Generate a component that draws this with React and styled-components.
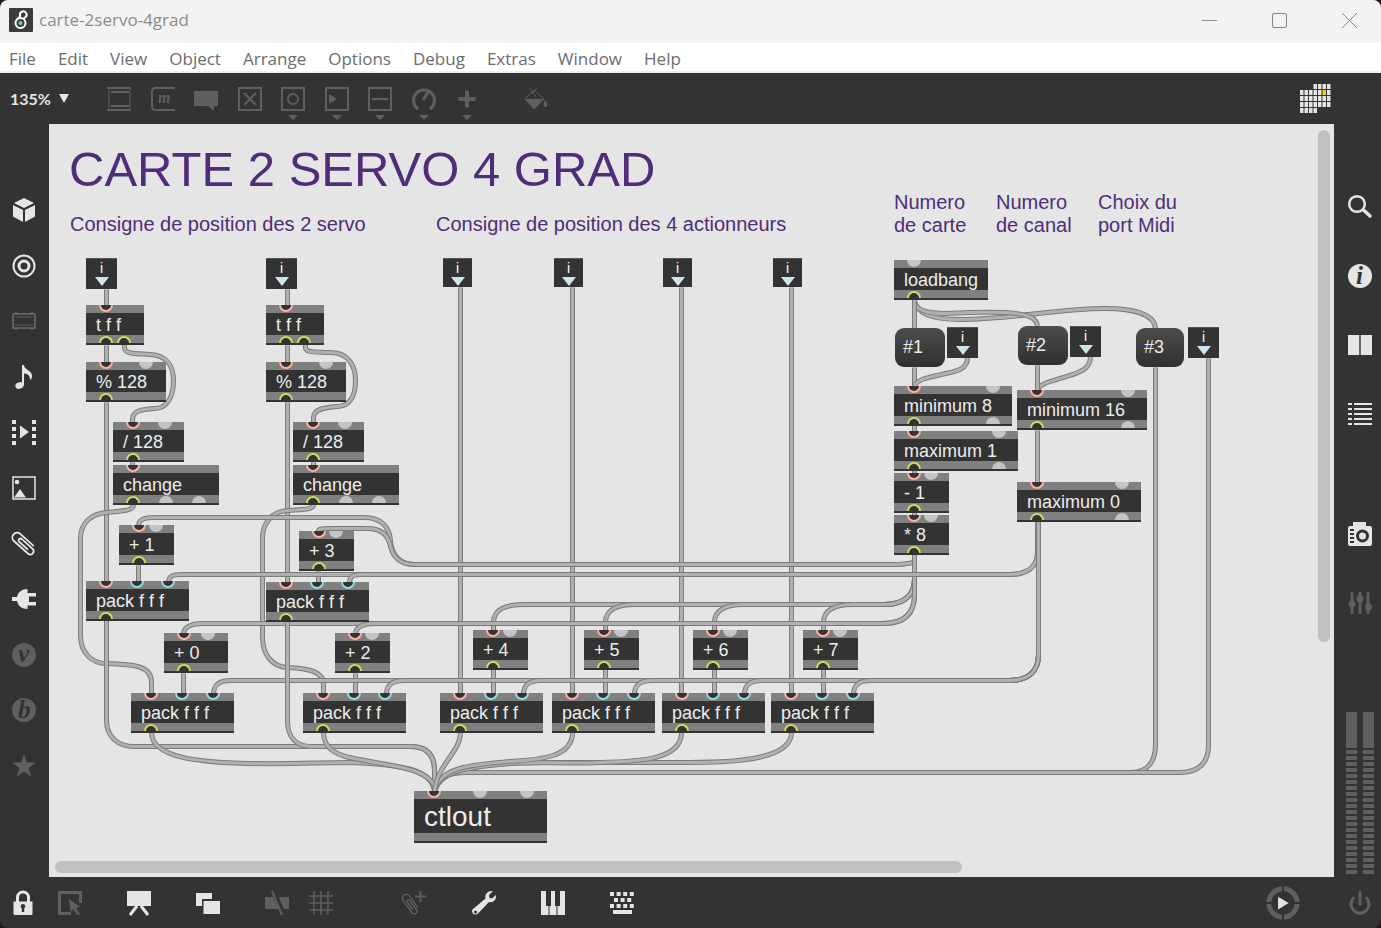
import React from 'react';
import styled, { createGlobalStyle, css } from 'styled-components';

const colors = {
  chrome: '#333333',
  canvas: '#e5e5e5',
  bright: '#e5e5e5',
  dim: '#5f5f5f',
  rail: '#808080',
  comment: '#502d78',
  hot: '#ffb0a0',
  cold: '#8fdcea',
  outlet: '#d0dc5c',
  unused: '#c2c4c7',
  cordEdge: '#7c7c7c',
  cord: '#b0b0b0',
};

const GlobalStyle = createGlobalStyle`
  * {
    box-sizing: border-box;
  }

  body {
    margin: 0;
    background: #24161c;
    font-family: 'Open Sans', sans-serif;
  }

  button {
    margin: 0;
    padding: 0;
    border: 0;
    background: none;
    color: inherit;
    font: inherit;
    cursor: pointer;
  }

  svg {
    display: block;
    overflow: visible;
  }
`;

const Window = styled.div`
  display: flex;
  flex-direction: column;
  min-height: 100vh;
  border-radius: 8px;
  overflow: hidden;
  background: ${colors.chrome};
`;

/* ---------- title and menus ---------- */

const TitleBar = styled.header`
  display: flex;
  align-items: center;
  height: 43px;
  padding: 0 8px 3px 9px;
  background: #f3f3f3;
  color: #8c8c8c;
`;

const WindowTitle = styled.h1`
  flex: 1;
  margin: 0 0 0 6px;
  font-size: 17px;
  font-weight: 400;
  line-height: 24px;
`;

const WindowControls = styled.div`
  display: flex;
  gap: 22px;

  button {
    display: flex;
    align-items: center;
    justify-content: center;
    width: 48px;
    height: 40px;
  }
`;

const MenuBar = styled.nav`
  display: flex;
  gap: 22px;
  height: 30px;
  padding-left: 9px;
  background: #fff;
  border-bottom: 2px solid #f0f0f0;
`;

const MenuItem = styled.button`
  padding-top: 3px !important;
  font-size: 17px;
  line-height: 24px;
  color: #6c6c6c !important;
`;

/* ---------- toolbars ---------- */

const TopBar = styled.div`
  display: flex;
  align-items: center;
  height: 51px;
  padding: 0 50px 0 10px;
  color: ${colors.dim};
`;

const Zoom = styled.button`
  display: flex;
  align-items: center;
  gap: 8px;
  width: 97px;
  font-family: Lato, sans-serif;
  font-size: 16px;
  font-weight: 700;
  color: ${colors.bright} !important;
`;

const ToolGroup = styled.div`
  display: flex;
  justify-content: space-between;
  width: 372px;
`;

const IconButton = styled.button`
  display: flex;
  flex-direction: column;
  align-items: center;
  width: ${({ $wide }) => $wide || 24}px;
  color: ${({ $dim }) => ($dim ? colors.dim : colors.bright)} !important;
`;

const Tool = styled(IconButton)`
  position: relative;

  ${({ $more }) =>
    $more &&
    css`
      &::after {
        content: '';
        position: absolute;
        top: 28px;
        border: 5px solid transparent;
        border-top-color: ${colors.dim};
        border-bottom: 0;
      }
    `}
`;

const FillTool = styled(IconButton)`
  margin-left: 45px;
`;

const GridTool = styled(IconButton)`
  margin-left: auto;
`;

const Workspace = styled.div`
  display: flex;
  flex: 1;
`;

const SideBar = styled.aside`
  display: flex;
  flex-direction: column;
  align-items: center;
  width: ${({ $width }) => $width}px;
  padding-top: ${({ $top }) => $top}px;
`;

const LeftTools = styled.div`
  display: flex;
  flex-direction: column;
  justify-content: space-between;
  height: 580px;
  margin-right: 2px;
`;

const RightTools = styled.div`
  display: flex;
  flex-direction: column;
  gap: 45px;
  margin-left: 4px;
`;

const SnapshotTools = styled(RightTools)`
  margin-top: 96px;
`;

const Meters = styled.div`
  display: flex;
  gap: 6px;
  margin: auto 0 3px 5px;
`;

const Meter = styled.div`
  width: 11px;
  height: 162px;
  background:
    linear-gradient(${colors.dim} 36px, transparent 36px),
    repeating-linear-gradient(transparent 0 2px, ${colors.dim} 2px 6px);
`;

const BottomBar = styled.footer`
  display: flex;
  align-items: center;
  height: 51px;
  padding: 0 9px 0 11px;
`;

const BottomGroup = styled.div`
  display: flex;
  gap: ${({ $gap }) => $gap}px;
  margin-left: ${({ $start }) => $start || 0}px;
`;

const BottomRight = styled(BottomGroup)`
  align-items: center;
  margin-left: auto;
`;

/* ---------- patcher ---------- */

const Patcher = styled.main`
  position: relative;
  flex: 1;
  min-width: 0;
  overflow: hidden;
  background: ${colors.canvas};
  font-family: 'Liberation Sans', Arial, sans-serif;
`;

const Cords = styled.svg`
  position: absolute;
  inset: 0;
  width: 100%;
  height: 100%;
  fill: none;
`;

const placed = css`
  position: absolute;
  left: ${({ $x }) => $x}px;
  top: ${({ $y }) => $y}px;
`;

const Comment = styled.p`
  ${placed}
  margin: 0;
  white-space: pre;
  color: ${colors.comment};
  font-size: ${({ $big }) => ($big ? 49 : 20)}px;
  line-height: ${({ $big }) => ($big ? 56 : 23)}px;
`;

const Box = styled.div`
  ${placed}
  width: ${({ $w }) => $w}px;
  border-top: 8px solid ${colors.rail};
  border-bottom: 2px solid ${colors.chrome};
  background: ${colors.chrome};
  color: #ececec;
`;

const BoxText = styled.div`
  padding: 2px 0 0 10px;
  white-space: pre;
  font-size: ${({ $big }) => ($big ? 28 : 18)}px;
  line-height: ${({ $big }) => ($big ? 32 : 20)}px;
`;

const Rail = styled.div`
  height: 8px;
  background: ${colors.rail};
`;

const portShape = css`
  position: absolute;
  left: ${({ $at }) => $at - 7}px;
  width: 14px;
  height: 7px;
  border: 2px solid ${({ $color }) => $color};
  background: ${({ $color }) => ($color === colors.unused ? colors.unused : colors.chrome)};
`;

const Inport = styled.span`
  ${portShape}
  top: -8px;
  border-top: 0;
  border-radius: 0 0 7px 7px;
`;

const Outport = styled.span`
  ${portShape}
  bottom: 0;
  border-bottom: 0;
  border-radius: 7px 7px 0 0;
`;

const InletBox = styled.div`
  ${placed}
  display: flex;
  flex-direction: column;
  align-items: center;
  gap: 1px;
  width: ${({ $size }) => $size}px;
  height: ${({ $size }) => $size}px;
  padding-top: 2px;
  border-top: 1px solid #555;
  background: ${colors.chrome};
  color: #fff;
  font-size: 14px;
  line-height: 15px;

  &::after {
    content: '';
    border: 7px solid transparent;
    border-top: 9px solid #cce6ea;
    border-bottom: 0;
  }
`;

const Message = styled.button`
  ${placed}
  width: ${({ $w }) => $w}px;
  height: 39px;
  padding-left: 8px !important;
  border-radius: 9px;
  background: linear-gradient(#4c4c4c, #303030) !important;
  color: #ececec !important;
  font-size: 18px !important;
  text-align: left;
`;

const Thumb = styled.div`
  position: absolute;
  border-radius: 6px;
  background: #c0c0c0;
`;

const VerticalThumb = styled(Thumb)`
  top: 6px;
  right: 4px;
  width: 12px;
  height: 68%;
`;

const HorizontalThumb = styled(Thumb)`
  bottom: 4px;
  left: 6px;
  width: 70.6%;
  height: 12px;
`;

const HOT = colors.hot;
const COLD = colors.cold;
const OUT = colors.outlet;
const NONE = colors.unused;

const adder = (x, y, text, w = 55, second = 37) => ({
  x, y, w, text, ins: [[20, HOT], [second, NONE]], outs: [[20, OUT]],
});

const pack = (x, y) => ({
  x, y, w: 103, text: 'pack f f f', ins: [[20, HOT], [51, COLD], [82, COLD]], outs: [[20, OUT]],
});

const limiter = (x, y, w, text, second) => ({
  x, y, w, text, ins: [[20, HOT], [second, NONE]], outs: [[20, OUT], [second, NONE]],
});

const servo = x => [
  { x, y: 181, w: 58, text: 't f f', ins: [[20, HOT]], outs: [[20, OUT], [38, OUT]] },
  adder(x, 238, '% 128', 80, 60),
  adder(x + 27, 298, '/ 128', 71, 52),
  { x: x + 27, y: 341, w: 106, text: 'change', ins: [[20, HOT]], outs: [[20, OUT], [53, NONE], [86, NONE]] },
];

const boxes = [
  ...servo(37),
  ...servo(217),
  adder(70, 401, '+ 1'),
  adder(250, 407, '+ 3'),
  pack(37, 457),
  pack(217, 458),
  adder(115, 509, '+ 0', 64, 44),
  adder(286, 509, '+ 2'),
  pack(82, 569),
  pack(254, 569),
  adder(424, 506, '+ 4'),
  adder(535, 506, '+ 5'),
  adder(644, 506, '+ 6'),
  adder(754, 506, '+ 7'),
  pack(391, 569),
  pack(503, 569),
  pack(613, 569),
  pack(722, 569),
  { x: 845, y: 136, w: 94, text: 'loadbang', ins: [[20, NONE]], outs: [[20, OUT]] },
  limiter(845, 262, 118, 'minimum 8', 99),
  limiter(845, 307, 124, 'maximum 1', 105),
  adder(845, 349, '- 1'),
  adder(845, 391, '* 8'),
  limiter(968, 266, 130, 'minimum 16', 111),
  limiter(968, 358, 124, 'maximum 0', 105),
  { x: 365, y: 667, w: 133, text: 'ctlout', big: true, ins: [[20, HOT], [66, NONE], [113, NONE]], outs: [] },
];

const inlets = [
  [37, 134, 31],
  [217, 134, 31],
  [394, 134, 29],
  [505, 134, 29],
  [614, 134, 29],
  [724, 134, 29],
  [898, 203, 31],
  [1021, 202, 31],
  [1139, 203, 31],
];

const messages = [
  [846, 204, 50, '#1'],
  [969, 202, 50, '#2'],
  [1087, 204, 48, '#3'],
];

const comments = [
  [20, 17, 'CARTE 2 SERVO 4 GRAD', true],
  [21, 89, 'Consigne de position des 2 servo'],
  [387, 89, 'Consigne de position des 4 actionneurs'],
  [845, 67, 'Numero\nde carte'],
  [947, 67, 'Numero\nde canal'],
  [1049, 67, 'Choix du\nport Midi'],
];

const cords = [
  // servo columns
  'M57 165V181',
  'M238 165V181',
  'M57 221V239',
  'M238 221V239',
  'M75 220V223C75 230 88 229 101 230C117 231 124 241 124 256C124 272 118 284 105 284C92 285 83 286 83 295V298',
  'M256 220V223C256 229 268 227 281 228C297 228 306 239 306 256C306 272 300 282 287 282C274 283 264 285 264 293V298',
  'M57 278V457',
  'M238 278V458',
  'M83 338V342',
  'M264 338V342',
  'M84 380C84 387 72 386 58 388C40 389 31 400 31 414V511C31 528 42 539 57 539C85 540 102 541 102 558V570',
  'M264 380C264 386 250 385 238 386C221 387 213 400 213 414V512C213 530 222 542 238 543C262 544 274 548 274 560V570',
  'M89 441V458',
  'M269 447V459',
  'M134 549V570',
  'M306 549V570',
  // actuator inlets
  ...[411, 523, 632, 742].map(x => `M${x} 163V570`),
  ...[444, 556, 665, 774].map(x => `M${x} 545V570`),
  // board number
  'M89 402C89 394 96 393 106 393H315C331 393 340 402 341 416C342 430 350 440 365 440H840C852 440 862 439 865 437V430',
  'M269 408V406C270 404 275 404 281 404H318C332 404 339 411 341 422C344 434 352 440 365 440H840C852 440 862 439 865 437V430',
  ...[444, 556, 665, 774].map(x => `M${x} 507V498C${x} 486 ${x + 11} 480 ${x + 29} 480H835C854 480 865 471 865 455V430`),
  ...[134, 306].map(x => `M${x} 510C${x} 502 ${x + 8} 499 ${x + 20} 499H834C855 499 865 489 865 470V430`),
  // channel number
  ...[119, 300].map(x => `M${x} 458C${x} 451 ${x + 5} 450 ${x + 13} 450H960C978 450 988 442 988 428V398`),
  ...[164, 337, 474, 585, 695, 804].map(
    x => `M${x} 570C${x} 560 ${x + 6} 556 ${x + 17} 556H960C980 556 989 546 989 530V398`
  ),
  // to ctlout
  'M57 496V596C57 612 68 622 85 622H361C377 622 385 630 385 646V668',
  'M238 497V596C238 612 246 622 262 622H361C377 622 385 630 385 646V668',
  'M102 608C102 634 152 638 200 639C240 640 270 638 301 638C350 640 384 644 385 668',
  'M274 608C274 626 290 632 310 635C345 642 378 644 385 662V668',
  'M1106 243V620C1106 636 1099 648 1081 648H415C400 648 388 652 385 668',
  'M1159 234V621C1159 638 1149 648 1131 648H415C400 648 388 652 385 668',
  'M742 608C742 634 690 638 640 638H500C440 638 388 642 385 668',
  'M632 608C632 636 588 637 550 638C510 640 480 636 450 640C415 643 388 648 385 668',
  'M523 608C523 632 494 635 460 637C425 640 388 642 385 668',
  'M411 608C411 628 387 640 385 668',
  // loadbang
  'M865 176C867 190 885 195 910 195C960 195 1010 184 1055 184C1085 184 1106 190 1106 205',
  'M865 176C865 186 877 189 897 189C915 188 935 187 955 188C978 189 988 193 988 203',
  'M865 175V205',
  'M865 243V263',
  'M918 233C918 246 905 247 892 250C878 253 867 255 865 262',
  'M865 301V392',
  'M1041 232C1041 247 1025 249 1014 253C1000 257 988 260 988 267',
  'M988 241V267',
  'M988 306V359',
];

const Icon = ({ size = 24, children, ...rest }) => (
  <svg width={size} height={size} viewBox="0 0 24 24" fill="currentColor" aria-hidden="true" {...rest}>
    {children}
  </svg>
);

const line = { fill: 'none', stroke: 'currentColor', strokeWidth: 2 };

const clip = (
  <path
    {...line}
    strokeWidth="1.800"
    strokeLinecap="round"
    transform="rotate(42 12 12)"
    d="M20 7H2.500A4.700 4.700 0 0 0 2.500 16.500H22A3.400 3.400 0 0 0 22 9.800H6.500A2 2 0 0 0 6.500 13.600H18"
  />
);

const Letter = ({ children, x = 6, y = 19, size = 25, ...rest }) => (
  <text x={x} y={y} fontFamily="Liberation Serif, serif" fontSize={size} fontWeight="700" fontStyle="italic" {...rest}>
    {children}
  </text>
);

const topTools = [
  ['Object', false, <path {...line} d="M2 0v24M23 0v24" key="a" strokeWidth="1" />, <path {...line} d="M0 1h24M4 5h18M4 19h18M0 23h24" key="b" />],
  [
    'Message',
    false,
    <path {...line} d="M24 1H5Q1 1 1 5V19Q1 23 5 23H24" key="a" />,
    <Letter x={7} y={16} size={16} key="b">m</Letter>,
  ],
  ['Comment', false, <path d="M0 4H24V19H20V24L14 19H0Z" key="a" />],
  ['Toggle', false, <path {...line} d="M1 1H23V23H1ZM6 6 18 18M18 6 6 18" key="a" />],
  ['Button', true, <path {...line} d="M1 1H23V23H1Z" key="a" />, <circle {...line} cx="12" cy="12" r="5" key="b" />],
  ['Number', true, <path {...line} d="M1 1H23V23H1Z" key="a" />, <path d="M4 7 12 12 4 17Z" key="b" />],
  ['Slider', true, <path {...line} d="M1 1H23V23H1ZM4 12H20" key="a" />],
  ['Dial', true, <path {...line} strokeWidth="3" d="M6 22A10.500 10.500 0 1 1 18 22M11 13 16 5" key="a" />],
  ['Add', true, <path d="M10 3.500H14V10H20.500V14H14V20.500H10V14H3.500V10H10Z" key="a" />],
];

const leftTools = [
  [
    'Objects',
    false,
    <path d="M12 0 22 5 12 10 2 5ZM1 7 11 12V24L1 18.500ZM23 7 13 12V24L23 18.500Z" key="a" />,
  ],
  [
    'Audio',
    false,
    <circle {...line} cx="12" cy="12" r="10.500" key="a" />,
    <circle {...line} strokeWidth="3" cx="12" cy="12" r="5" key="b" />,
  ],
  [
    'Plug-ins',
    true,
    <path {...line} d="M1 5H23V19H1ZM4 3V5M20 3V5M4 19V21M20 19V21" key="a" />,
    <path {...line} strokeWidth="1" d="M3 8H21M3 16H21" key="b" />,
  ],
  [
    'Sounds',
    false,
    <ellipse cx="7.500" cy="20.500" rx="4.200" ry="3.200" transform="rotate(-20 7.500 20.500)" key="a" />,
    <path d="M10 0H12C12 5 20 5 20 11 20 13 19.500 14 18 15 18.500 9.500 14 8.500 12 8.500V20.500H10Z" key="b" />,
  ],
  [
    'Video',
    false,
    <path d="M8 5.500 17 12 8 18.500Z" key="a" />,
    <path {...line} strokeWidth="4" strokeDasharray="4 3" d="M2 0V25M22 0V25" key="b" />,
  ],
  [
    'Images',
    false,
    <path {...line} strokeWidth="1.500" d="M1 1H23V23H1Z" key="a" />,
    <circle cx="5" cy="6" r="2.300" key="b" />,
    <path d="M2 21.500 8 13 14 21.500Z" key="c" />,
  ],
  ['Paperclips', false, React.cloneElement(clip, { key: 'a' })],
  ['Extensions', false, <path d="M0 10H5C6 5 10 2 15.500 2V6H24V9.500H17V15H24V18.500H15.500V22C10 22 6 19 5 14H0Z" key="a" />],
  [
    'Vizzie',
    true,
    <circle cx="12" cy="12" r="12" key="a" />,
    <Letter fill={colors.chrome} key="b">v</Letter>,
  ],
  [
    'Beap',
    true,
    <circle cx="12" cy="12" r="12" key="a" />,
    <Letter y={20} fill={colors.chrome} key="b">b</Letter>,
  ],
  ['Favorites', true, <path d="M12 0 14.800 8.500H24L16.500 14 19.500 23 12 17.500 4.500 23 7.500 14 0 8.500H9.200Z" key="a" />],
];

const rightTools = [
  [
    'Search',
    false,
    <circle {...line} strokeWidth="2.500" cx="9" cy="9" r="7.800" key="a" />,
    <path {...line} strokeWidth="3.500" strokeLinecap="round" d="M15.500 15 22 21" key="b" />,
  ],
  [
    'Inspector',
    false,
    <circle cx="12" cy="12" r="12" key="a" />,
    <Letter x={8} y={20} fill={colors.chrome} key="b">i</Letter>,
  ],
  ['Reference', false, <path d="M0 2H11.300V22H0ZM12.700 2H24V22H12.700Z" key="a" />],
  ['Console', false, <path {...line} d="M0 2H4M0 7H4M0 12H4M0 17H4M0 22H4M6 2H24M6 7H24M6 12H24M6 17H24M6 22H24" key="a" />],
];

const snapshotTools = [
  [
    'Snapshots',
    false,
    <path d="M5 0H18V4H22Q24 4 24 6V22Q24 24 22 24H2Q0 24 0 22V6Q0 4 2 4H5Z" key="a" />,
    <circle cx="14.500" cy="14" r="5" fill="none" stroke={colors.chrome} strokeWidth="3" key="b" />,
    <path d="M2 8H6M2 12H6M2 16H6M2 20H6" stroke={colors.chrome} strokeWidth="2" key="c" />,
  ],
  [
    'Parameters',
    true,
    <path {...line} strokeWidth="3" d="M4 1V23M12 1V23M20 1V23" key="a" />,
    <circle cx="4" cy="13" r="3.500" key="b" />,
    <circle cx="12" cy="8" r="3.500" key="c" />,
    <circle cx="20.500" cy="16" r="3.500" key="d" />,
  ],
];

const bottomTools = [
  {
    gap: 23,
    start: 0,
    tools: [
      [
        'Lock',
        false,
        <path {...line} strokeWidth="3" d="M6.500 12V6.500A5 5 0 0 1 17.500 6.500V12" key="a" />,
        <path d="M2.500 10.500H21.500V22.500Q21.500 24 20 24H4Q2.500 24 2.500 22.500Z" key="b" />,
        <path d="M12 13A2.300 2.300 0 0 1 13.200 17.300V21H10.800V17.300A2.300 2.300 0 0 1 12 13Z" fill={colors.chrome} key="c" />,
      ],
      [
        'Select',
        true,
        <path {...line} strokeWidth="3" d="M22.500 12V1.500H1.500V22.500H13" key="a" />,
        <path d="M11 8 22 16 18 17 22 23 19 24 15.500 18 12.500 21Z" key="b" />,
      ],
    ],
  },
  { gap: 45, start: 45, tools: [
    ['Presentation', false, <path d="M0 0H24V15H0Z" key="a" />, <path {...line} strokeWidth="3" d="M10 15 3 24M14 15 21 24" key="b" />],
    ['Patcher windows', false, <path d="M0 2H16V8H6V15H0ZM7.500 10H24V23H7.500Z" key="a" />],
    [
      'Hide on lock',
      true,
      <path d="M0 6H8L14 18H0ZM13.500 6H24V18H19Z" key="a" />,
      <path {...line} d="M7 0 17 24" key="b" />,
    ],
  ] },
  { gap: 69, start: 20, tools: [
    ['Grid', true, <path {...line} strokeWidth="1.500" d="M5 0V24M12 0V24M19 0V24M0 5H24M0 12H24M0 19H24" key="a" />],
    [
      'Add paperclip',
      true,
      <g transform="translate(-1 4) scale(.8)" key="a"><g transform="rotate(12 12 12)">{clip}</g></g>,
      <path {...line} d="M18.500 0V11M13 5.500H24" key="b" />,
    ],
  ] },
  { gap: 45, start: 46, tools: [
    [
      'Tools',
      false,
      <path fillRule="evenodd" d="M21 0 17 4 17.500 7 20 7.500 24 4C24.500 9 21 12 17 11L6 22.500C3.500 25-1.500 22.500.5 18.500L13.500 7.500C12.500 3 16-.5 21 0ZM3.500 19.500A1.500 1.500 0 1 0 3.500 22.500 1.500 1.500 0 0 0 3.500 19.500Z" key="a" />,
    ],
    [
      'Keyboard',
      false,
      <path d="M0 0H5V15H7.500V24H0ZM8.500 15H10V0H14V15H15.500V24H8.500ZM19 0H24V24H16.500V15H19Z" key="a" />,
    ],
    [
      'Shortcuts',
      false,
      <path {...line} strokeWidth="4" strokeDasharray="4 2.600" d="M0 3H24M0 15H24M4 9H22" key="a" />,
      <path d="M3 19H22V23H3Z" key="b" />,
    ],
  ] },
];

// first and last column of each row
const calendarRows = [
  [3, 7],
  [0, 7],
  [0, 7],
  [0, 7],
  [0, 4],
];

const renderTool = ([label, dim, ...shapes]) => (
  <IconButton key={label} aria-label={label} $dim={dim}>
    <Icon>{shapes}</Icon>
  </IconButton>
);

const PatchBox = ({ x, y, w, text, big, ins, outs }) => (
  <Box $x={x} $y={y} $w={w}>
    {ins.map(([at, color]) => (
      <Inport key={at} $at={at} $color={color} />
    ))}
    <BoxText $big={big}>{text}</BoxText>
    <Rail />
    {outs.map(([at, color]) => (
      <Outport key={at} $at={at} $color={color} />
    ))}
  </Box>
);

const App = () => (
  <>
    <GlobalStyle />
    <Window>
      <TitleBar>
        <svg width="24" height="24" viewBox="0 0 24 24" aria-hidden="true">
          <rect width="24" height="24" rx="1" fill="#3c3c3c" />
          <g fill="none" stroke="#fff" strokeWidth="2">
            <circle cx="11.500" cy="15" r="5" />
            <path d="M8 11.500 11 8.500V7A3.300 3.300 0 1 1 16 9.500L14 11" />
          </g>
          <circle cx="11.500" cy="15" r="2" fill="#4fd8c0" />
        </svg>
        <WindowTitle>carte-2servo-4grad</WindowTitle>
        <WindowControls>
          <button aria-label="Minimize">
            <svg width="15" height="15" stroke="#909090"><path d="M0 7.500H15" /></svg>
          </button>
          <button aria-label="Maximize">
            <svg width="15" height="15" fill="none" stroke="#858585"><rect x=".5" y=".5" width="14" height="14" rx="1.500" /></svg>
          </button>
          <button aria-label="Close">
            <svg width="15" height="15" stroke="#858585"><path d="M0 0 15 15M15 0 0 15" /></svg>
          </button>
        </WindowControls>
      </TitleBar>

      <MenuBar>
        {['File', 'Edit', 'View', 'Object', 'Arrange', 'Options', 'Debug', 'Extras', 'Window', 'Help'].map(name => (
          <MenuItem key={name}>{name}</MenuItem>
        ))}
      </MenuBar>

      <TopBar>
        <Zoom>
          135%
          <svg width="10" height="9" viewBox="0 0 10 9" fill="currentColor"><path d="M0 0H10L5 9Z" /></svg>
        </Zoom>
        <ToolGroup>
          {topTools.map(([label, more, ...shapes]) => (
            <Tool key={label} aria-label={label} $dim $more={more}>
              <Icon>{shapes}</Icon>
            </Tool>
          ))}
        </ToolGroup>
        <FillTool aria-label="Format palette" $dim>
          <Icon>
            <path d="M1 12 10 3 20 12 10 22Z" fill="none" stroke="currentColor" />
            <path d="M1 12H19L10 22ZM21 13C24 16 24 20 21.500 20S19 16 21 13Z" />
            <path {...line} strokeWidth="1" d="M6 1 12 10M13 1 8 7" />
          </Icon>
        </FillTool>
        <GridTool aria-label="Calendar" $wide={31}>
          <svg width="31" height="30" viewBox="0 0 31 30" fill="currentColor">
            {calendarRows.map(([from, to], row) =>
              Array.from({ length: to - from }, (_, i) => (
                <rect
                  key={`${row}-${i}`}
                  x={(from + i) * 4.500}
                  y={row * 6}
                  width="3.500"
                  height="5"
                  fill={row === 1 && from + i === 5 ? '#e8d21c' : 'currentColor'}
                />
              ))
            )}
          </svg>
        </GridTool>
      </TopBar>

      <Workspace>
        <SideBar $width={49} $top={74}>
          <LeftTools>{leftTools.map(renderTool)}</LeftTools>
        </SideBar>

        <Patcher>
          <Cords>
            <g transform="translate(.5 .5)">
              {cords.map((d, i) => (
                <g key={i}>
                  <path d={d} stroke={colors.cordEdge} strokeWidth="5" />
                  <path d={d} stroke={colors.cord} strokeWidth="3" />
                </g>
              ))}
            </g>
          </Cords>
          {comments.map(([x, y, text, big]) => (
            <Comment key={text} $x={x} $y={y} $big={big}>{text}</Comment>
          ))}
          {boxes.map(box => (
            <PatchBox key={`${box.x}-${box.y}`} {...box} />
          ))}
          {messages.map(([x, y, w, text]) => (
            <Message key={text} $x={x} $y={y} $w={w}>{text}</Message>
          ))}
          {inlets.map(([x, y, size]) => (
            <InletBox key={x} $x={x} $y={y} $size={size}>i</InletBox>
          ))}
          <VerticalThumb />
          <HorizontalThumb />
        </Patcher>

        <SideBar $width={47} $top={71}>
          <RightTools>{rightTools.map(renderTool)}</RightTools>
          <SnapshotTools>{snapshotTools.map(renderTool)}</SnapshotTools>
          <Meters>
            <Meter />
            <Meter />
          </Meters>
        </SideBar>
      </Workspace>

      <BottomBar>
        {bottomTools.map(({ gap, start, tools }) => (
          <BottomGroup key={tools[0][0]} $gap={gap} $start={start}>{tools.map(renderTool)}</BottomGroup>
        ))}
        <BottomRight $gap={48}>
          <IconButton aria-label="Run" $wide={34}>
            <Icon size={34}>
              <circle cx="12" cy="12" r="10" fill="none" stroke={colors.dim} strokeWidth="3.500" />
              <path d="M12 0V5M12 19V24M0 12H5M19 12H24" stroke={colors.chrome} strokeWidth="1.500" />
              <path d="M8.500 7.500 16 12 8.500 16.500Z" />
            </Icon>
          </IconButton>
          <IconButton aria-label="Audio on" $dim>
            <Icon>
              <path {...line} strokeWidth="3" strokeLinecap="round" d="M5.500 7A9 9 0 1 0 18.500 7M12 1.500V13" />
            </Icon>
          </IconButton>
        </BottomRight>
      </BottomBar>
    </Window>
  </>
);

export default App;
